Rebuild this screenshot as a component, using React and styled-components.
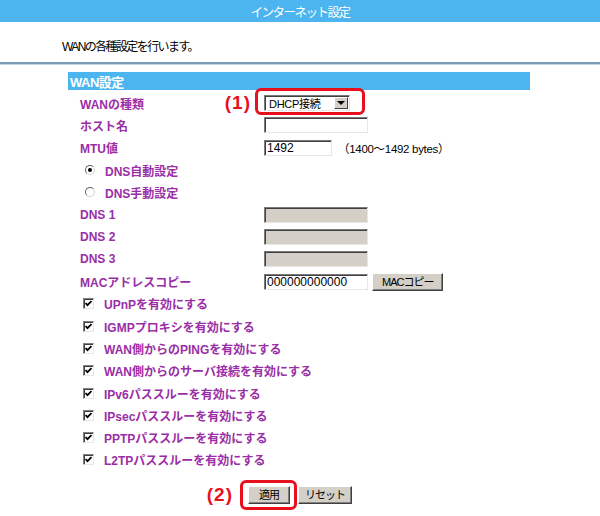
import React from 'react';
import styled, { createGlobalStyle } from 'styled-components';

const GlobalStyle = createGlobalStyle`
  html, body {
    margin: 0;
    padding: 0;
    background: #fff;
  }
  body {
    width: 600px;
    height: 516px;
    overflow: hidden;
    font-family: 'Liberation Sans', 'Noto Sans CJK JP', sans-serif;
    font-size: 12px;
    color: #000;
  }
`;

const BLUE = '#4cb4ee';
const PURPLE = '#9a2ea6';
const RED = '#e8101c';

const TitleBar = styled.div`
  height: 22px;
  background: ${BLUE};
  color: #fff;
  font-size: 12.5px;
  letter-spacing: -1.5px;
  display: flex;
  align-items: center;
  justify-content: center;
`;

const Intro = styled.div`
  height: 40px;
  box-sizing: border-box;
  padding: 17px 0 0 62px;
  line-height: 16px;
  letter-spacing: -1.6px;
`;

const Divider = styled.div`
  height: 1px;
  border-top: 2px solid #7c9cb6;
  background: #c3d5e4;
`;

const Section = styled.section`
  width: 462px;
  margin: 7px 0 0 68px;
`;

const SectionHeader = styled.div`
  height: 18px;
  background: ${BLUE};
  color: #fff;
  font-weight: bold;
  font-size: 13px;
  padding-left: 2px;
  display: flex;
  align-items: center;
  letter-spacing: -0.5px;
`;

const Rows = styled.div`
  padding-top: 2px;
`;

const Row = styled.div`
  height: 22.3px;
  display: flex;
  align-items: center;
  padding-left: ${(p) => (p.$marker ? 14 : 12)}px;
`;

const Label = styled.span`
  width: 184px;
  flex: none;
  color: ${PURPLE};
  font-weight: bold;
  font-size: 12px;
`;

const OptionText = styled.span`
  color: ${PURPLE};
  font-weight: bold;
  font-size: 12px;
  margin-left: 10px;
`;

const Field = styled.div`
  width: ${(p) => p.$w}px;
  height: 16px;
  box-sizing: border-box;
  border: 1px solid;
  border-color: #7a7a7a #e6e6e6 #e6e6e6 #7a7a7a;
  box-shadow: inset 1px 1px 0 #404040;
  background: ${(p) => (p.$disabled ? '#d4d0c8' : '#fff')};
  padding: 1px 0 0 2px;
  font-size: 12px;
  line-height: 13px;
`;

const Hint = styled.span`
  margin-left: 6px;
  font-size: 11.5px;
  letter-spacing: -0.3px;
`;

const Highlight = styled.span`
  position: relative;
  display: inline-flex;
  &::after {
    content: '';
    position: absolute;
    top: ${(p) => p.$t}px;
    left: ${(p) => p.$l}px;
    right: ${(p) => p.$r}px;
    bottom: ${(p) => p.$b}px;
    border: 3px solid ${RED};
    border-radius: 6px;
    pointer-events: none;
  }
`;

const Callout = styled.span`
  position: absolute;
  right: calc(100% + ${(p) => p.$gap}px);
  top: 50%;
  transform: translateY(-50%);
  color: ${RED};
  font-weight: bold;
  font-size: 19px;
  letter-spacing: 1px;
  white-space: nowrap;
  font-family: 'Liberation Sans', sans-serif;
`;

const Select = styled.div`
  width: 86px;
  height: 16px;
  box-sizing: border-box;
  border: 1px solid;
  border-color: #7a7a7a #e6e6e6 #e6e6e6 #7a7a7a;
  box-shadow: inset 1px 1px 0 #404040;
  background: #fff;
  display: flex;
  align-items: center;
  padding-left: 4px;
  font-size: 11px;
  letter-spacing: -0.3px;
`;

const SelectArrow = styled.span`
  margin-left: auto;
  width: 14px;
  height: 12px;
  margin-right: 1px;
  box-sizing: border-box;
  background: #d4d0c8;
  border: 1px solid;
  border-color: #fff #404040 #404040 #fff;
  display: flex;
  align-items: center;
  justify-content: center;
  &::before {
    content: '';
    border-left: 4px solid transparent;
    border-right: 4px solid transparent;
    border-top: 4px solid #000;
  }
`;

const Button = styled.button`
  height: 18px;
  box-sizing: border-box;
  padding: 0 ${(p) => p.$pad}px;
  background: #d4d0c8;
  border: 1px solid;
  border-color: #fff #404040 #404040 #fff;
  box-shadow: inset -1px -1px 0 #808080;
  font-family: 'Liberation Sans', 'Noto Sans CJK JP', sans-serif;
  font-size: 11px;
  letter-spacing: -1px;
  line-height: 14px;
  color: #000;
  margin-left: ${(p) => p.$ml || 0}px;
`;

const Radio = styled.span`
  width: 10px;
  height: 10px;
  box-sizing: border-box;
  border-radius: 50%;
  border: 1px solid;
  border-color: #606060 #d0d0d0 #d0d0d0 #606060;
  background: #fff;
  display: flex;
  align-items: center;
  justify-content: center;
  margin-left: 3px;
  &::after {
    content: '';
    width: 4px;
    height: 4px;
    border-radius: 50%;
    background: ${(p) => (p.$on ? '#000' : 'transparent')};
  }
`;

const Check = styled.span`
  width: 11px;
  height: 11px;
  box-sizing: border-box;
  border: 1px solid;
  border-color: #808080 #e6e6e6 #e6e6e6 #808080;
  box-shadow: inset 1px 1px 0 #404040;
  background: #fff;
  display: flex;
  align-items: center;
  justify-content: center;
  margin-left: 1px;
`;

const Actions = styled.div`
  display: flex;
  justify-content: center;
  margin-top: 15px;
`;

function CheckMark() {
  return (
    <svg width="7" height="7" viewBox="0 0 7 7">
      <path d="M0.5 3 L2.5 5.2 L6.5 1" fill="none" stroke="#000" strokeWidth="1.8" />
    </svg>
  );
}

const options = [
  'UPnPを有効にする',
  'IGMPプロキシを有効にする',
  'WAN側からのPINGを有効にする',
  'WAN側からのサーバ接続を有効にする',
  'IPv6パススルーを有効にする',
  'IPsecパススルーを有効にする',
  'PPTPパススルーを有効にする',
  'L2TPパススルーを有効にする',
];

export default function App() {
  return (
    <>
      <GlobalStyle />
      <TitleBar>インターネット設定</TitleBar>
      <Intro>WANの各種設定を行います。</Intro>
      <Divider />
      <Section>
        <SectionHeader>WAN設定</SectionHeader>
        <Rows>
          <Row>
            <Label>WANの種類</Label>
            <Highlight $t={-7} $l={-9} $r={-15} $b={-4}>
              <Callout $gap={13}>(1)</Callout>
              <Select>
                DHCP接続
                <SelectArrow />
              </Select>
            </Highlight>
          </Row>
          <Row>
            <Label>ホスト名</Label>
            <Field $w={104} />
          </Row>
          <Row>
            <Label>MTU値</Label>
            <Field $w={68}>1492</Field>
            <Hint>（1400〜1492 bytes）</Hint>
          </Row>
          <Row $marker>
            <Radio $on />
            <OptionText>DNS自動設定</OptionText>
          </Row>
          <Row $marker>
            <Radio />
            <OptionText>DNS手動設定</OptionText>
          </Row>
          {['DNS 1', 'DNS 2', 'DNS 3'].map((d) => (
            <Row key={d}>
              <Label>{d}</Label>
              <Field $w={104} $disabled />
            </Row>
          ))}
          <Row>
            <Label>MACアドレスコピー</Label>
            <Field $w={104}>000000000000</Field>
            <Button $pad={9} $ml={4}>MACコピー</Button>
          </Row>
          {options.map((o) => (
            <Row $marker key={o}>
              <Check>
                <CheckMark />
              </Check>
              <OptionText>{o}</OptionText>
            </Row>
          ))}
        </Rows>
      </Section>
      <Actions>
        <Highlight $t={-6} $l={-8} $r={-7} $b={-6}>
          <Callout $gap={15}>(2)</Callout>
          <Button $pad={10}>適用</Button>
        </Highlight>
        <Button $pad={6} $ml={8}>リセット</Button>
      </Actions>
    </>
  );
}
